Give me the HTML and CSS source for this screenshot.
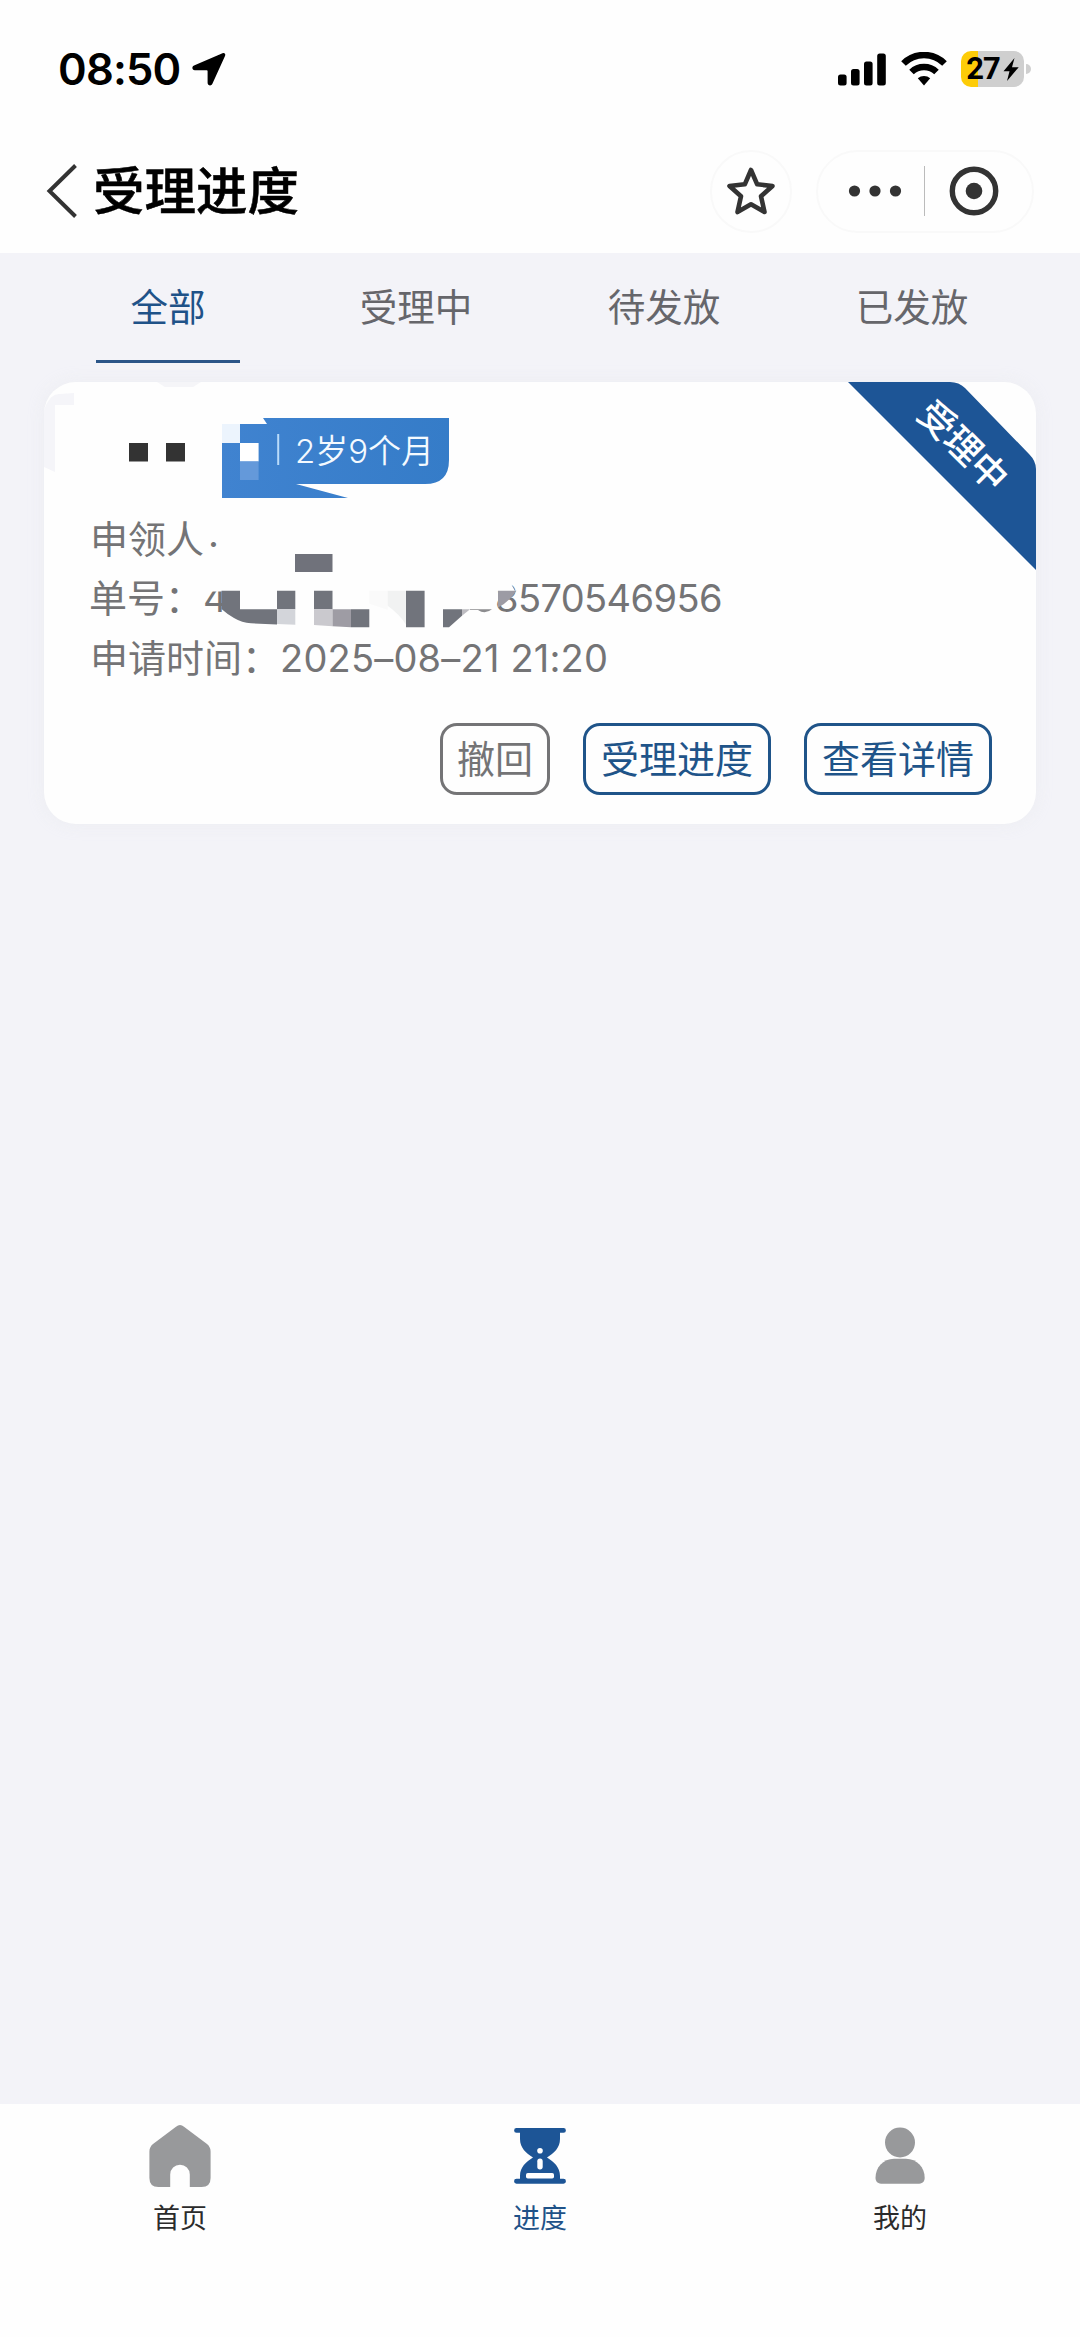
FILE: index.html
```html
<!DOCTYPE html>
<html lang="zh-CN">
<head>
<meta charset="utf-8">
<title>受理进度</title>
<link rel="stylesheet" href="styles.css">
</head>
<body>
<div class="app">
  <header class="header">
    <div class="status">
      <span class="time">08:50</span>
      <svg class="location" width="34" height="34" viewBox="0 0 34 34"><path d="M30.500 1.200 2 13.600c-2.600 1.200-1.900 4.600.8 4.600h11.900c.6 0 .9.3.9.900v11.600c0 3 3.600 3.700 4.800 1.100L33 4c.9-2.100-.6-3.600-2.500-2.800Z" fill="#000"/></svg>
      <div class="indicators">
        <svg width="48" height="33" viewBox="0 0 48 33"><rect y="21.500" width="8.600" height="11" rx="2.500"/><rect x="13" y="16" width="8.600" height="16.500" rx="2.500"/><rect x="26" y="8.500" width="8.600" height="24" rx="2.500"/><rect x="39.200" y=".5" width="8.600" height="32" rx="2.500"/></svg>
        <svg class="wifi" width="46" height="35" viewBox="0 0 46 35"><path d="M2.500 11.500a29 29 0 0 1 41 0M10.500 20a18 18 0 0 1 25 0" fill="none" stroke="#000" stroke-width="6.500"/><path d="M16.800 26.300a9.500 9.500 0 0 1 12.400 0L23 33.500Z"/></svg>
        <div class="battery">
          <span class="battery-level">27</span>
          <svg width="16" height="23" viewBox="0 0 16 23"><path d="M11.500 0 .5 13.300h6L4 23 15.700 9.300H9Z"/></svg>
        </div>
        <span class="battery-cap"></span>
      </div>
    </div>
    <div class="nav">
      <svg class="back" width="32" height="54" viewBox="0 0 32 54"><path d="M29.500 1.500 3.500 27l26 25.500" fill="none" stroke="#333" stroke-width="4"/></svg>
      <h1 class="title">受理进度</h1>
      <div class="favorite">
        <svg width="50" height="50" viewBox="0 0 50 50"><path d="m25 4 6.200 14.300L46.500 20 35 30.300l3.500 15.700L25 38.300 11.500 46 15 30.300 3.500 20l15.300-1.700Z" fill="none" stroke="#333" stroke-width="4.600" stroke-linejoin="round"/></svg>
      </div>
      <div class="capsule">
        <svg class="dots" width="54" height="12" viewBox="0 0 54 12"><g fill="#333"><circle cx="6.500" cy="6" r="5.600"/><circle cx="27" cy="6" r="5.600"/><circle cx="47.500" cy="6" r="5.600"/></g></svg>
        <span class="capsule-line"></span>
        <svg class="target" width="50" height="50" viewBox="0 0 50 50"><circle cx="25" cy="25" r="21.700" fill="none" stroke="#333" stroke-width="5.400"/><circle cx="25" cy="25" r="8.300" fill="#333"/></svg>
      </div>
    </div>
  </header>

  <nav class="tabs">
    <span class="tab tab-active">全部</span>
    <span class="tab">受理中</span>
    <span class="tab">待发放</span>
    <span class="tab">已发放</span>
  </nav>

  <main class="content">
    <article class="card">
      <div class="card-head">
        <span class="age">2岁9个月</span>
      </div>
      <div class="row"><span>申领人</span><span class="point">·</span></div>
      <div class="row row-number"><span>单号：</span><span class="first-digit">4</span><span class="number">8570546956</span></div>
      <div class="row row-time"><span>申请时间：</span><span class="date">2025–08–21 21:20</span></div>
      <div class="actions">
        <button class="button button-muted">撤回</button>
        <button class="button">受理进度</button>
        <button class="button">查看详情</button>
      </div>

      <!-- Blocks that hide the personal details -->
      <svg class="mask" width="992" height="442" viewBox="44 382 992 442">
        <path d="M46 405q6-12 14-11l14-1v12H55v67l-11-5V410Z" fill="#f5f5f9"/>
        <path d="M157 382h44l-8 5h-28Z" fill="#f5f5f8"/>
        <path d="M129 443h19v18.500h-19ZM166 443h19v18.500h-19Z" fill="#333"/>
        <path d="M222 424h18v19h-18Z" fill="#ecf4fd"/>
        <path d="M240 443h18.600v18.500H240Z" fill="#fff"/>
        <path d="M240 461.500h18.600V480H240Z" fill="#6499da"/>
        <path d="M277.200 434h2v31h-2Z" fill="#b9dbfa"/>
        <path d="M295 554h37.500v18H295Z" fill="#70727b"/>
        <path d="M200 575h40v16.500h-40Z" fill="#fefefe"/>
        <g fill="#71747c">
          <path d="M221.500 590.700H240v18.500h37V624.500l-26-1.200q-9-.5-17-5.300-7-4-12.500-9Z"/>
          <path d="M277 590.700h18.300v18.600H277ZM314 590.700h18.500v18.600H314ZM351 609.300h18.300v18H351ZM406 590.700h18.600v36.600H406Z"/>
          <path d="M443 609.300h19v6.500L449 627.300h-6Z"/>
        </g>
        <path d="M277 609.300h18.300v15.500L277 624Z" fill="#d3d5da"/>
        <path d="M314 609.300h18.500v17L314 625Z" fill="#cac9ce"/>
        <path d="M332.500 609.300H351v18l-18.500-1Z" fill="#9e9ca4"/>
        <path d="M369.300 590.700h18.400v19l-18.400-6Z" fill="#fafafa"/>
        <path d="M387.700 590.700H406v34q-6-10-18.300-19Z" fill="#f1f2f2"/>
        <path d="M462 609.300h8l-8 6.500Z" fill="#bdbcc1"/>
        <path d="M470 609.300h22q-7 5.500-14 .8h-8Z" fill="#8c8c8f"/>
        <path d="M495 580h14l6 11h-20Z" fill="#fefefe"/>
        <path d="M498 590.700h18.500Q509 602 498 607.500Z" fill="#9c9ba4"/>
      </svg>

      <div class="ribbon">
        <svg width="188" height="188" viewBox="0 0 188 188"><path d="M0 0h102q9 0 15 6l64 66q7 7 7 15v101Z" fill="#1d5596"/></svg>
        <span class="ribbon-text">受理中</span>
      </div>
    </article>
  </main>

  <footer class="tabbar">
    <div class="item">
      <svg width="64" height="64" viewBox="0 0 64 64"><path d="M28 2.700q4-3.200 8 0l23 17.300q3.600 3 3.600 7.500V54q0 9-9 9H41.800V50.500a9.800 9.800 0 0 0-19.600 0V63H10.400q-9 0-9-9V27.500q0-4.500 3.600-7.500Z" fill="#98999b"/></svg>
      <span>首页</span>
    </div>
    <div class="item item-active">
      <svg width="64" height="64" viewBox="0 0 64 64"><path d="M8.500 4h47a2.300 2.300 0 0 1 0 4.800H52V15c0 9-6 14-13 18.500C46 38 52 43 52 52v2.800h3.500a2.400 2.400 0 0 1 0 4.900h-47a2.400 2.400 0 0 1 0-4.900H12V52c0-9 6-14 13-18.500C18 29 12 24 12 15V8.800H8.500a2.300 2.300 0 0 1 0-4.800Z" fill="#1d5596"/><g fill="#fff"><circle cx="32" cy="26.800" r="2.800"/><rect x="29.300" y="34.500" width="5.400" height="11" rx="2.700"/><rect x="18" y="49" width="28" height="5.500" rx="1.800"/></g></svg>
      <span>进度</span>
    </div>
    <div class="item">
      <svg width="64" height="64" viewBox="0 0 64 64"><g fill="#98999b"><circle cx="32" cy="18.500" r="15"/><path d="M26 34.700h12c11 0 18.700 9 18.700 19 0 4.500-3 6-7 6H14.500c-4 0-7-1.500-7-6 0-10 7.500-19 18.500-19Z"/></g></svg>
      <span>我的</span>
    </div>
  </footer>
</div>
</body>
</html>
```
FILE: styles.css
```css
* { box-sizing: border-box; }

body {
  margin: 0;
  background: #f3f3f8;
  font-family: "Inter", "Noto Sans CJK SC", sans-serif;
  color: #333;
}

.app {
  display: flex;
  flex-direction: column;
  width: 1080px;
  height: 2337px;
}

.header {
  height: 253px;
  background: #fefefe;
}

.status {
  display: flex;
  align-items: center;
  height: 138px;
  padding: 0 49px 0 58px;
  color: #000;
}

.time {
  width: 124px;
  font-size: 43.500px;
  font-weight: 600;
  letter-spacing: -0.800px;
  white-space: nowrap;
}

.location { margin-left: 10px; }

.indicators {
  display: flex;
  align-items: center;
  margin-left: auto;
}

.wifi { margin: 0 14px 0 15px; }

.battery {
  display: flex;
  align-items: center;
  justify-content: center;
  gap: 3px;
  width: 63px;
  height: 36px;
  border-radius: 10px;
  background: linear-gradient(90deg, #fdcc08 17px, #cfcfcf 17px);
  color: #000;
}

.battery-level {
  font-family: Roboto, "Inter", sans-serif;
  font-size: 31px;
  font-weight: 700;
  line-height: 36px;
  letter-spacing: -1px;
}

.battery-cap {
  width: 5px;
  height: 10px;
  margin-left: 2px;
  border-radius: 0 5px 5px 0;
  background: #cfcfcf;
}

.nav {
  display: flex;
  align-items: center;
  height: 106px;
  padding: 0 46px 0 46px;
}

.title {
  margin: 0 0 0 15px;
  color: #000;
  font-size: 51.500px;
  font-weight: 500;
  line-height: 80px;
  -webkit-text-stroke: 0.500px #000;
}

.favorite,
.capsule {
  display: flex;
  align-items: center;
  height: 83px;
  border: 2px solid #f9f9f9;
  border-radius: 42px;
}

.favorite {
  justify-content: center;
  width: 82px;
  margin-left: auto;
}

.capsule {
  width: 218px;
  margin-left: 24px;
  padding-left: 30px;
}

.capsule-line {
  width: 1px;
  height: 50px;
  margin: 0 24px 0 22px;
  background: #bbb;
}

.tabs {
  display: grid;
  grid-template-columns: repeat(4, 1fr);
  height: 129px;
  padding: 0 44px;
}

.tab {
  display: flex;
  justify-content: center;
  justify-self: center;
  width: 144px;
  height: 110px;
  color: #66666b;
  font-size: 37.500px;
  line-height: 109px;
}

.tab-active {
  border-bottom: 3px solid #2b5588;
  color: #1f5288;
}

.content {
  flex: 1;
  padding: 0 44px;
}

.card {
  position: relative;
  height: 442px;
  padding: 36px 44px 0 46px;
  border-radius: 32px;
  background: #fefefe;
  box-shadow: 0 0 16px rgba(235, 236, 240, 0.800);
}

.card-head {
  height: 80px;
  padding-left: 132px;
}

.age {
  display: block;
  width: 227px;
  height: 80px;
  padding-left: 73px;
  background: linear-gradient(90deg, #4083d0, #357cc8);
  clip-path: path("M41 0H227V42Q227 66 203 66H74L126 80H0V6H45Z");
  color: #f4faff;
  font-size: 33px;
  font-weight: 350;
  line-height: 66px;
  white-space: nowrap;
}

.row {
  display: flex;
  height: 59px;
  margin-top: 11px;
  color: #747476;
  font-size: 38px;
  font-weight: 400;
  line-height: 60px;
  white-space: nowrap;
}

.row-number,
.row-time { margin-top: 0; }

.row-time { height: 62px; }

.row-number > :first-child { margin-left: -1px; }

.row-time { line-height: 62px; }

.point { margin: 5px 0 0 4px; }

.first-digit { width: 16px; }

.number {
  margin-left: 276px;
  letter-spacing: -0.600px;
}

.date { letter-spacing: 0.200px; }

.actions {
  display: flex;
  justify-content: flex-end;
  gap: 33px;
  margin-top: 34px;
}

.button {
  height: 72px;
  padding: 0 15px;
  border: 3px solid #1f5489;
  border-radius: 17px;
  background: transparent;
  color: #1f5489;
  font: 400 38px/64px "Inter", "Noto Sans CJK SC", sans-serif;
}

.button-muted {
  padding: 0 14px;
  border-color: #747476;
  color: #747476;
}

.mask {
  position: absolute;
  top: 0;
  left: 0;
}

.ribbon {
  position: absolute;
  top: 0;
  right: 0;
  width: 188px;
  height: 188px;
}

.ribbon-text {
  position: absolute;
  top: 44px;
  left: 55px;
  width: 120px;
  color: #fff;
  font-size: 36.500px;
  font-weight: 500;
  line-height: 40px;
  text-align: center;
  transform: rotate(45deg);
}

.tabbar {
  display: grid;
  grid-template-columns: repeat(3, 1fr);
  height: 233px;
  background: #fefefe;
}

.item {
  display: flex;
  flex-direction: column;
  align-items: center;
  padding-top: 20px;
  color: #2b2b2b;
  font-size: 27px;
  line-height: 40px;
}

.item span { margin-top: 11px; }

.item-active { color: #1f5288; }
```
